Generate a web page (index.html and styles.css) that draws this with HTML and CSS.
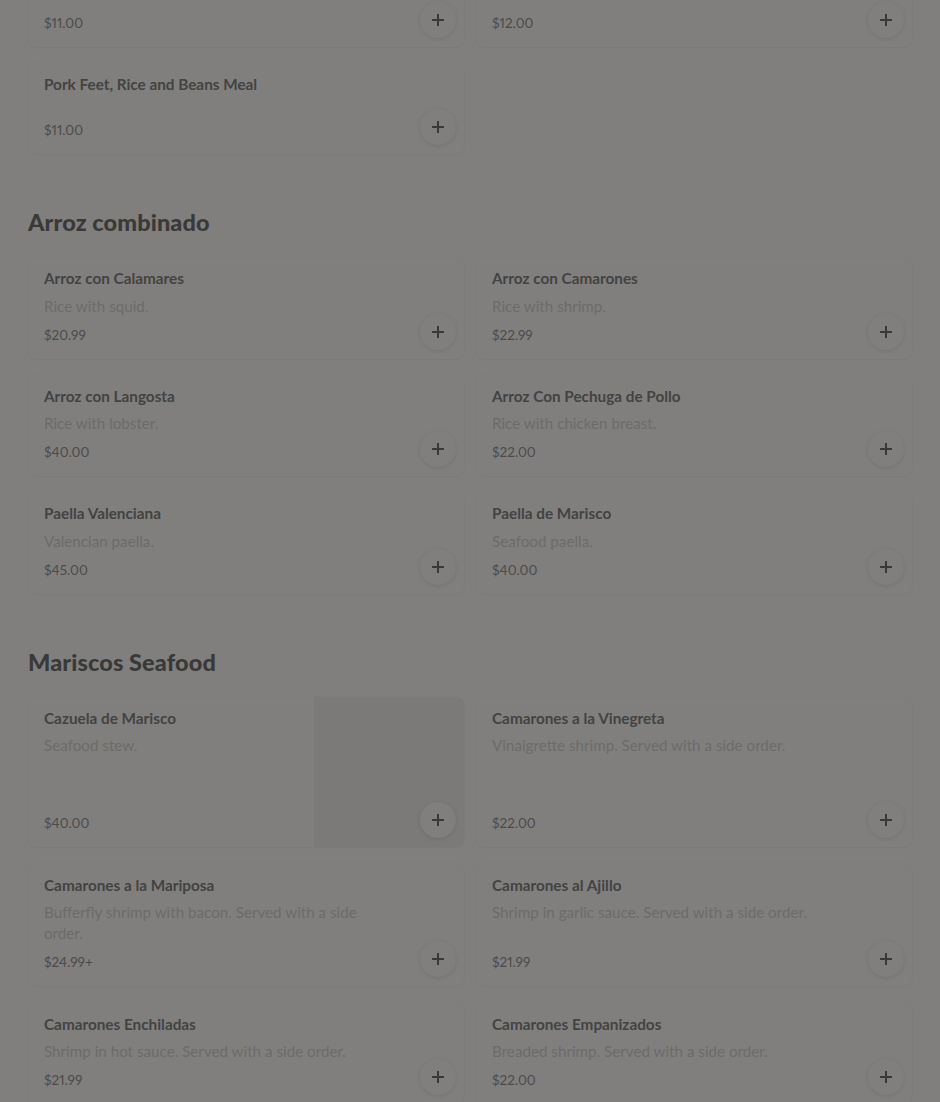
FILE: index.html
```html
<!DOCTYPE html>
<html lang="es">
<head>
<meta charset="utf-8">
<title>Menu</title>
<link rel="stylesheet" href="styles.css">
</head>
<body>
<main class="menu">
  <section class="section section-first">
    <div class="grid">
      <div class="card card-cut">
        <div class="card-body">
          <div class="price">$11.00</div>
        </div>
        <button class="add" aria-label="Add"><svg viewBox="0 0 16 16" width="16" height="16"><path d="M8 2v12M2 8h12" stroke="currentColor" stroke-width="2" fill="none"/></svg></button>
      </div>
      <div class="card card-cut">
        <div class="card-body">
          <div class="price">$12.00</div>
        </div>
        <button class="add" aria-label="Add"><svg viewBox="0 0 16 16" width="16" height="16"><path d="M8 2v12M2 8h12" stroke="currentColor" stroke-width="2" fill="none"/></svg></button>
      </div>
      <div class="card">
        <div class="card-body">
          <div class="title">Pork Feet, Rice and Beans Meal</div>
          <div class="price">$11.00</div>
        </div>
        <button class="add" aria-label="Add"><svg viewBox="0 0 16 16" width="16" height="16"><path d="M8 2v12M2 8h12" stroke="currentColor" stroke-width="2" fill="none"/></svg></button>
      </div>
    </div>
  </section>

  <section class="section">
    <h2 class="heading">Arroz combinado</h2>
    <div class="grid">
      <div class="card">
        <div class="card-body">
          <div class="title">Arroz con Calamares</div>
          <div class="desc">Rice with squid.</div>
          <div class="price">$20.99</div>
        </div>
        <button class="add" aria-label="Add"><svg viewBox="0 0 16 16" width="16" height="16"><path d="M8 2v12M2 8h12" stroke="currentColor" stroke-width="2" fill="none"/></svg></button>
      </div>
      <div class="card">
        <div class="card-body">
          <div class="title">Arroz con Camarones</div>
          <div class="desc">Rice with shrimp.</div>
          <div class="price">$22.99</div>
        </div>
        <button class="add" aria-label="Add"><svg viewBox="0 0 16 16" width="16" height="16"><path d="M8 2v12M2 8h12" stroke="currentColor" stroke-width="2" fill="none"/></svg></button>
      </div>
      <div class="card">
        <div class="card-body">
          <div class="title">Arroz con Langosta</div>
          <div class="desc">Rice with lobster.</div>
          <div class="price">$40.00</div>
        </div>
        <button class="add" aria-label="Add"><svg viewBox="0 0 16 16" width="16" height="16"><path d="M8 2v12M2 8h12" stroke="currentColor" stroke-width="2" fill="none"/></svg></button>
      </div>
      <div class="card">
        <div class="card-body">
          <div class="title">Arroz Con Pechuga de Pollo</div>
          <div class="desc">Rice with chicken breast.</div>
          <div class="price">$22.00</div>
        </div>
        <button class="add" aria-label="Add"><svg viewBox="0 0 16 16" width="16" height="16"><path d="M8 2v12M2 8h12" stroke="currentColor" stroke-width="2" fill="none"/></svg></button>
      </div>
      <div class="card">
        <div class="card-body">
          <div class="title">Paella Valenciana</div>
          <div class="desc">Valencian paella.</div>
          <div class="price">$45.00</div>
        </div>
        <button class="add" aria-label="Add"><svg viewBox="0 0 16 16" width="16" height="16"><path d="M8 2v12M2 8h12" stroke="currentColor" stroke-width="2" fill="none"/></svg></button>
      </div>
      <div class="card">
        <div class="card-body">
          <div class="title">Paella de Marisco</div>
          <div class="desc">Seafood paella.</div>
          <div class="price">$40.00</div>
        </div>
        <button class="add" aria-label="Add"><svg viewBox="0 0 16 16" width="16" height="16"><path d="M8 2v12M2 8h12" stroke="currentColor" stroke-width="2" fill="none"/></svg></button>
      </div>
    </div>
  </section>

  <section class="section">
    <h2 class="heading">Mariscos Seafood</h2>
    <div class="grid grid-seafood">
      <div class="card">
        <div class="card-body">
          <div class="title">Cazuela de Marisco</div>
          <div class="desc">Seafood stew.</div>
          <div class="price">$40.00</div>
        </div>
        <div class="thumb"></div>
        <button class="add" aria-label="Add"><svg viewBox="0 0 16 16" width="16" height="16"><path d="M8 2v12M2 8h12" stroke="currentColor" stroke-width="2" fill="none"/></svg></button>
      </div>
      <div class="card">
        <div class="card-body">
          <div class="title">Camarones a la Vinegreta</div>
          <div class="desc">Vinaigrette shrimp. Served with a side order.</div>
          <div class="price">$22.00</div>
        </div>
        <button class="add" aria-label="Add"><svg viewBox="0 0 16 16" width="16" height="16"><path d="M8 2v12M2 8h12" stroke="currentColor" stroke-width="2" fill="none"/></svg></button>
      </div>
      <div class="card">
        <div class="card-body">
          <div class="title">Camarones a la Mariposa</div>
          <div class="desc">Bufferfly shrimp with bacon. Served with a side order.</div>
          <div class="price">$24.99+</div>
        </div>
        <button class="add" aria-label="Add"><svg viewBox="0 0 16 16" width="16" height="16"><path d="M8 2v12M2 8h12" stroke="currentColor" stroke-width="2" fill="none"/></svg></button>
      </div>
      <div class="card">
        <div class="card-body">
          <div class="title">Camarones al Ajillo</div>
          <div class="desc">Shrimp in garlic sauce. Served with a side order.</div>
          <div class="price">$21.99</div>
        </div>
        <button class="add" aria-label="Add"><svg viewBox="0 0 16 16" width="16" height="16"><path d="M8 2v12M2 8h12" stroke="currentColor" stroke-width="2" fill="none"/></svg></button>
      </div>
      <div class="card">
        <div class="card-body">
          <div class="title">Camarones Enchiladas</div>
          <div class="desc">Shrimp in hot sauce. Served with a side order.</div>
          <div class="price">$21.99</div>
        </div>
        <button class="add" aria-label="Add"><svg viewBox="0 0 16 16" width="16" height="16"><path d="M8 2v12M2 8h12" stroke="currentColor" stroke-width="2" fill="none"/></svg></button>
      </div>
      <div class="card">
        <div class="card-body">
          <div class="title">Camarones Empanizados</div>
          <div class="desc">Breaded shrimp. Served with a side order.</div>
          <div class="price">$22.00</div>
        </div>
        <button class="add" aria-label="Add"><svg viewBox="0 0 16 16" width="16" height="16"><path d="M8 2v12M2 8h12" stroke="currentColor" stroke-width="2" fill="none"/></svg></button>
      </div>
    </div>
  </section>
</main>
</body>
</html>
```

FILE: styles.css
```css
html, body {
  margin: 0;
  padding: 0;
  background: #807f7e;
  overflow: hidden;
}

body {
  font-family: "Lato", "Liberation Sans", sans-serif;
  color: #3c3c3c;
}

.menu {
  padding: 0 28px;
  margin-top: -44px;
}

.section {
  margin-top: 54px;
}

.section-first {
  margin-top: 0;
}

.heading {
  margin: 0 0 21px;
  font-size: 23.5px;
  line-height: 28px;
  font-weight: 900;
  color: #393938;
  letter-spacing: 0.1px;
}

.grid {
  display: grid;
  grid-template-columns: 1fr 1fr;
  column-gap: 12px;
  row-gap: 16px;
}

.grid-seafood {
  row-gap: 17px;
}

.card {
  position: relative;
  display: flex;
  min-height: 91px;
  border-radius: 8px;
  background: #807f7e;
  box-shadow: 0 0 0 1px rgba(0, 0, 0, 0.01), 0 1px 3px rgba(0, 0, 0, 0.02);
}

.card-body {
  flex: 1;
  min-width: 0;
  display: flex;
  flex-direction: column;
  padding: 12px 72px 12px 16px;
}

.title {
  font-size: 15.3px;
  line-height: 18px;
  font-weight: 700;
  color: #434342;
}

.desc {
  margin-top: 8.5px;
  font-size: 15.2px;
  line-height: 20.5px;
  color: #6c6b6a;
}

.price {
  margin-top: auto;
  padding-top: 6.5px;
  font-size: 13.5px;
  line-height: 24px;
  color: #4c4b4a;
  font-variant-numeric: proportional-nums;
}

.thumb {
  flex: 0 0 150px;
  height: 150px;
  background: #7b7a79;
  border-radius: 0 8px 8px 0;
}

.add {
  position: absolute;
  right: 8px;
  bottom: 9px;
  width: 36px;
  height: 36px;
  padding: 0;
  border: none;
  border-radius: 50%;
  background: #817f7e;
  color: #393938;
  display: flex;
  align-items: center;
  justify-content: center;
  box-shadow: 0 1px 4px rgba(0, 0, 0, 0.1);
}

.add svg {
  display: block;
}
```
